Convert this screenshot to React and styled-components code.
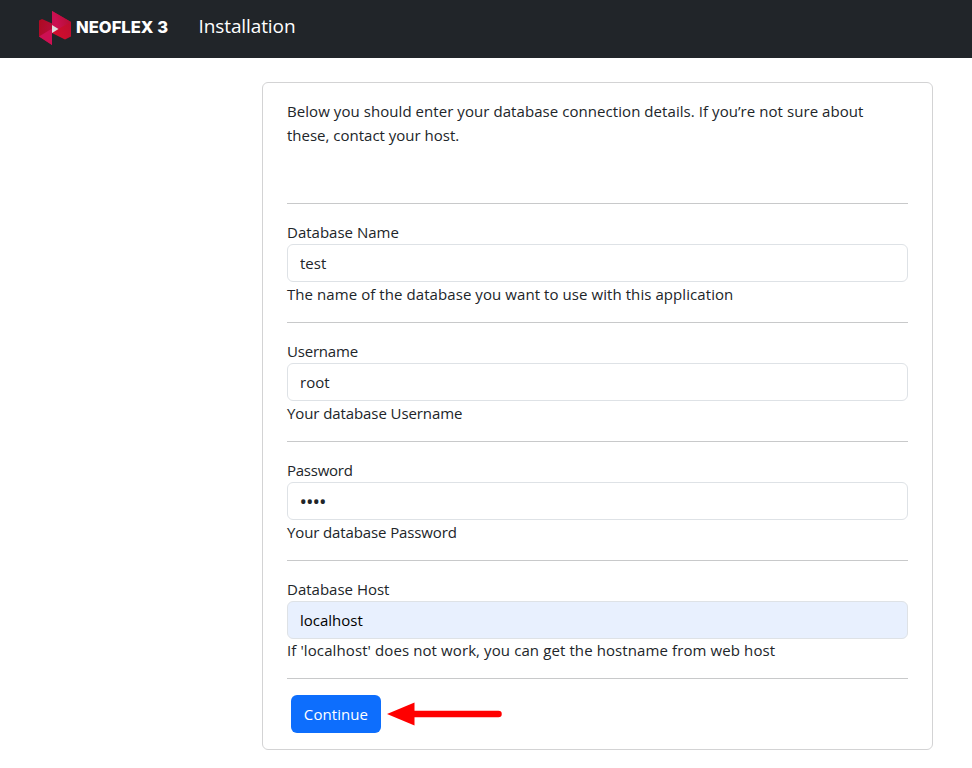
import React from "react";
import styled, { createGlobalStyle } from "styled-components";

const GlobalStyle = createGlobalStyle`
  *, *::before, *::after { box-sizing: border-box; }
  body {
    margin: 0;
    background: #fff;
    color: #212529;
    font-family: "Open Sans", "Noto Sans", sans-serif;
    font-size: 15px;
    line-height: 24px;
  }
`;

const Navbar = styled.nav`
  display: flex;
  align-items: center;
  height: 58px;
  padding-left: 39px;
  background: #212529;
  color: #fff;
`;

const Brand = styled.a`
  display: flex;
  align-items: center;
  width: 159.5px;
  height: 54px;
  margin-top: -2px;
`;

const LogoMark = styled.svg`
  flex: none;
  width: 32px;
  height: 34px;
`;

const BrandName = styled.span`
  margin: -3px 0 0 5px;
  font-family: Inter, sans-serif;
  font-size: 16.6px;
  font-weight: 800;
  white-space: nowrap;
`;

const NavTitle = styled.span`
  margin-top: -6px;
  font-size: 19px;
  letter-spacing: -0.1px;
`;

const Card = styled.form`
  width: 671px;
  height: 668px;
  margin: 24px 0 0 262px;
  padding: 16px 24px 0;
  border: 1px solid #d3d3d4;
  border-radius: 6px;
`;

const Intro = styled.p`
  height: 104px;
  margin: 0;
`;

const Line = styled.span`
  display: block;
  letter-spacing: ${(p) => p.$spacing || 0}px;
  white-space: nowrap;
`;

const Divider = styled.hr`
  height: 1px;
  margin: 0;
  border: 0;
  background: #c8c9ca;
`;

const Field = styled.div`
  height: ${(p) => (p.$last ? 117 : 118)}px;
  padding-top: 16px;
`;

const Label = styled.label`
  display: block;
  letter-spacing: ${(p) => p.$spacing || 0}px;
`;

const Input = styled.input`
  display: block;
  width: 100%;
  height: 38px;
  padding: 6px 12px;
  border: 1px solid #dee2e6;
  border-radius: 6px;
  outline: 0;
  background: ${(p) => (p.$autofilled ? "#e8f0fe" : "#fff")};
  color: ${(p) => (p.$autofilled ? "#000" : "#212529")};
  font: inherit;

  &[type="password"] {
    padding-left: 11.5px;
    font-size: 20px;
    letter-spacing: -1.05px;
  }
`;

const Help = styled.div`
  letter-spacing: ${(p) => p.$spacing || 0}px;
  margin-top: ${(p) => (p.$last ? -1 : 0)}px;
  white-space: nowrap;
`;

const Actions = styled.div`
  display: flex;
  align-items: center;
  gap: 6px;
  padding: 16px 0 0 4px;
`;

const Submit = styled.button`
  width: 90px;
  height: 38px;
  padding: 0;
  border: 0;
  border-radius: 6px;
  background: #0d6efd;
  color: #fff;
  font: inherit;
  letter-spacing: 0.08px;
`;

const Arrow = styled.svg`
  width: 115px;
  height: 24px;
`;

const FIELDS = [
  { id: "name", label: "Database Name", value: "test", help: "The name of the database you want to use with this application", spacing: 0.073 },
  { id: "user", label: "Username", labelSpacing: -0.2, value: "root", help: "Your database Username", spacing: -0.09 },
  { id: "pass", type: "password", label: "Password", labelSpacing: -0.25, value: "test", help: "Your database Password", spacing: -0.12 },
  { id: "host", label: "Database Host", value: "localhost", help: "If 'localhost' does not work, you can get the hostname from web host", spacing: 0.103, last: true },
];

export default function App() {
  return (
    <>
      <GlobalStyle />
      <Navbar>
        <Brand>
          <LogoMark viewBox="0 0 32 34">
            <defs>
              <linearGradient id="left" x1="0" y1="0" x2="1" y2="0.6">
                <stop offset="0" stopColor="#ad0a20" />
                <stop offset="1" stopColor="#b50d3c" />
              </linearGradient>
              <linearGradient id="right" x1="1" y1="0" x2="0" y2="1">
                <stop offset="0" stopColor="#b50c31" />
                <stop offset="1" stopColor="#d80e2c" />
              </linearGradient>
              <linearGradient id="fold" x1="0" y1="0.6" x2="1" y2="0.4">
                <stop offset="0.2" stopColor="#cb1051" />
                <stop offset="1" stopColor="#b50c31" />
              </linearGradient>
            </defs>
            <path d="M0 9.500 3 8 13 12.500V34L0 25.500Z" fill="url(#left)" />
            <path d="M0 25.500 13 17.500V34Z" fill="#cc1053" />
            <path d="M13 0 32 11V25.500L26 28.500 13 22Z" fill="url(#right)" />
            <path d="M13 0 32 11 19 18 13 14Z" fill="url(#fold)" />
            <path d="M13 14 19.500 18 13 22Z" fill="#dedede" />
          </LogoMark>
          <BrandName>NEOFLEX 3</BrandName>
        </Brand>
        <NavTitle>Installation</NavTitle>
      </Navbar>
      <Card>
        <Intro>
          <Line $spacing={0.063}>Below you should enter your database connection details. If you’re not sure about</Line>
          <Line>these, contact your host.</Line>
        </Intro>
        {FIELDS.map((f) => (
          <React.Fragment key={f.id}>
            <Divider />
            <Field $last={f.last}>
              <Label htmlFor={f.id} $spacing={f.labelSpacing}>{f.label}</Label>
              <Input id={f.id} type={f.type || "text"} defaultValue={f.value} $autofilled={f.last} />
              <Help $spacing={f.spacing} $last={f.last}>{f.help}</Help>
            </Field>
          </React.Fragment>
        ))}
        <Divider />
        <Actions>
          <Submit type="button">Continue</Submit>
          <Arrow viewBox="0 0 115 24">
            <path d="M0 12 27.500 0.500V23.500Z" fill="#f00" />
            <path d="M25 12H111.500" stroke="#f00" strokeWidth="6.500" strokeLinecap="round" />
          </Arrow>
        </Actions>
      </Card>
    </>
  );
}
